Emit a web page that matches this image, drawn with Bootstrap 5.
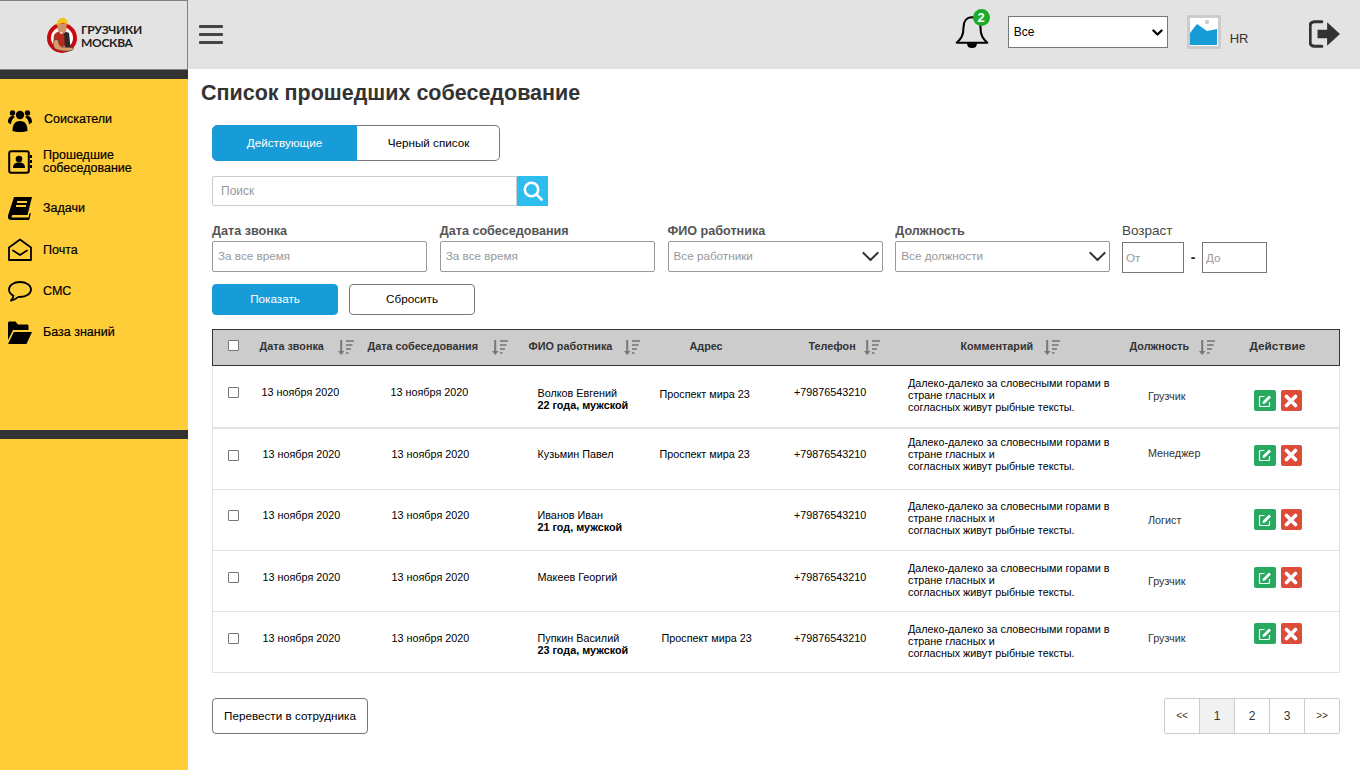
<!DOCTYPE html>
<html lang="ru">
<head>
<meta charset="utf-8">
<title>Список прошедших собеседование</title>
<link href="https://cdn.jsdelivr.net/npm/bootstrap@5.3.0/dist/css/bootstrap.min.css" rel="stylesheet">
<style>
html,body{height:100%}
body{font-family:"Liberation Sans",Arial,sans-serif;font-size:12px;color:#000;background:#fff;overflow:hidden}
.shell{width:1360px;height:770px}
.side{width:188px;background:#ffcd38;flex:none}
.logo-box{height:70px;background:#e3e3e3;border:1px solid #808080;border-left:0;gap:3px;padding-left:46px}
.logo-text{font-family:Lato,sans-serif;font-weight:700;font-size:12px;letter-spacing:-.3px;line-height:13px;color:#222;margin-top:1px}
.dark-bar{height:9px;background:#333}
.side-nav{height:351px;padding-top:19px}
.side-item{height:41.4px;padding-left:8px;color:#000;font-size:12.5px;line-height:13px;text-decoration:none;-webkit-text-stroke:.2px #000}
.side-item:first-child{height:43.6px}
.side-item:first-child .side-ico{margin-right:12px}
.side-item.two{margin-bottom:5px}
.side-ico{width:24px;height:24px;flex:none;margin-right:11px}
.top{height:69px;background:#e3e3e3;padding-left:11px}
.burger{width:24px;flex:none;margin-right:auto}
.burger i{display:block;height:3px;background:#444;margin:5px 0;border-radius:1px}
.top-sel{width:160px;height:32px;padding:0 5px;border:1px solid #777;border-radius:0;font-size:12px;color:#000;margin:0 19px 5px 0;background-position:right 4px center;background-size:11px;background-image:url("data:image/svg+xml,%3csvg xmlns='http://www.w3.org/2000/svg' viewBox='0 0 16 16'%3e%3cpath fill='none' stroke='%23000' stroke-width='3.200' stroke-linecap='round' stroke-linejoin='round' d='M2 5l6 6 6-6'/%3e%3c/svg%3e")}
.bell-wrap{width:36px;height:46px;margin:0 17px 7px 0}
.cnt{right:1px;top:1px;width:17px;height:17px;background:#1aab2a;color:#fff;font-size:13px;font-weight:700;line-height:17px;padding:0;border-radius:50%}
.ava{width:34px;height:34px;border:3px solid #ccc;background:#fff;margin:0 9px 5px 0}
.hr-name{font-size:13px;color:#333;margin:9px 60.5px 0 0}
.exit{margin:0 19px 1px 0}
.main{padding:0 20px 0 13px;min-width:0}
.ttl{font-size:21.5px;font-weight:700;color:#333;line-height:26px;margin:11px 0 19px;}
.inner{padding-left:11px}
.tabs-w .btn{width:144px;height:36px;font-size:11.7px;padding:0;line-height:34px;border-radius:5px}
.tabs-w .btn-blue{width:145px}
.tabs-w .btn-line{width:143px;padding-left:1px}
.btn-blue{background:#189cd8;border:1px solid #189cd8;color:#fff}
.btn-blue:hover{background:#189cd8;color:#fff;border-color:#189cd8}
.btn-line{background:#fff;border:1px solid #777;color:#000}
.search-w{width:336px;height:30px;margin-top:15px}
.search-w .form-control{height:30px;font-size:12px;padding:0 8px;border:1px solid #ccc;border-radius:2px 0 0 2px;color:#777}
.form-control::placeholder{color:#999}
.search-b{width:31px;background:#2dbdee;border:0;padding:0;flex:none;border-radius:0}
.flt{gap:12.75px;margin-top:16px}
.fld{width:215px}
.fld-age{margin-left:-1px}
.flabel{font-size:12.6px;font-weight:700;color:#555;line-height:18px;margin:0 0 1px;display:block}
.flabel.reg{font-weight:400;color:#444;font-size:13.5px}
.fld .form-control,.fld .form-select{height:31px;font-size:11.7px;padding:0 5px 1px;border:1px solid #999;border-radius:2px;color:#999}
.fld .form-control{padding-bottom:3px}
.fld .form-select{background-size:19px;background-position:right 2px center;background-image:url("data:image/svg+xml,%3csvg xmlns='http://www.w3.org/2000/svg' viewBox='0 0 16 16'%3e%3cpath fill='none' stroke='%23333' stroke-width='1.700' stroke-linecap='round' stroke-linejoin='round' d='M2 5l6 6 6-6'/%3e%3c/svg%3e")}
.age{margin-top:2px}
.age .form-control{width:62px;height:31px;font-size:11.7px;padding:0 3px;border:1px solid #777;border-radius:0;color:#999}
.age .form-control + .dash + .form-control{width:65px}
.dash{width:18px;text-align:center;font-weight:700;font-size:14px;color:#222}
.acts{margin-top:11px;gap:11px}
.acts .btn{width:126px;height:31px;font-size:11.7px;padding:0;line-height:28px;border-radius:4px}
.grid-t{table-layout:fixed;width:1127px;margin:14px 0 0;border-collapse:collapse;font-size:10.8px;line-height:12px;color:#000;--bs-table-bg:transparent}
.grid-t th{height:36px;background:#ccc;border:solid #333;border-width:1px 0;padding:0;font-weight:700;font-size:10.8px;color:#333;vertical-align:middle;white-space:nowrap;box-shadow:none}
.grid-t th:first-child{border-left:1px solid #333}
.grid-t th:last-child{border-right:1px solid #333;font-size:11.8px;padding-bottom:4px}
.grid-t th.h4c{padding-bottom:4px}
.grid-t td{padding:0;vertical-align:top;border:0;border-bottom:1px solid #e3e3e3;box-shadow:none;color:#000}
.grid-t td:first-child{border-left:1px solid #e3e3e3}
.grid-t td:last-child{border-right:1px solid #e3e3e3}
.grid-t td.c-ps{color:#333}
.grid-t tr.r1 td{height:62px;border-bottom-width:2px}
.grid-t tr.r2 td{height:62px}
.grid-t tr.r3 td,.grid-t tr.r4 td,.grid-t tr.r5 td{height:61px}
.sort{display:inline-block;vertical-align:middle;margin-left:14px}
.sort.m12{margin-left:12px}
.sort.m11{margin-left:11px}
.sort.m10{margin-left:10px}
.sort.m8{margin-left:8px}
.ck{appearance:none;-webkit-appearance:none;display:block;width:11px;height:11px;margin:0;border:1px solid #767676;background:#fff;border-radius:1px}
th .ck{margin:0 0 4px 15px}
td .ck{margin-left:15px}
.c-dt{padding-left:12px!important}
.c-dt.fst{padding-left:11px!important}
.c-dt2{padding-left:31px!important}
.c-dt2.fst{padding-left:30px!important}
.c-nm{padding-left:17px!important}
.c-ad{padding-left:9px!important}
.c-ad.alt{padding-left:11px!important}
.c-ph{padding-left:33.5px!important}
.c-cm{padding-left:7.5px!important}
.c-ps{padding-left:27.5px!important}
.c-ac{padding-left:13px!important;white-space:nowrap}
.h1c{padding-left:9px!important}
.h2c{padding-left:7px!important}
.h3c{padding-left:8px!important}
.h4c{padding-left:39px!important}
.h5c{padding-left:48px!important}
.h6c{padding-left:60px!important}
.h7c{padding-left:9px!important}
.h8c{padding-left:9px!important}
.t7{padding-top:7px!important}.t10{padding-top:10px!important}.t11{padding-top:11px!important}
.t16{padding-top:16px!important}.t18{padding-top:18px!important}.t19{padding-top:19px!important}
.t20{padding-top:20px!important}.t21{padding-top:21px!important}.t22{padding-top:22px!important}
.t24{padding-top:24px!important}
.ib{display:inline-flex;align-items:center;justify-content:center;width:22px;height:21px;padding:0;border:0;border-radius:2px;vertical-align:top}
.ib-g{background:#27a960;margin-right:5px}
.ib-r{background:#dd4b39;width:21px}
.bot{margin-top:25px}
.bot .btn{width:156px;height:36px;font-size:11.7px;padding:0;line-height:34px;border-radius:4px}
.pager{--bs-pagination-padding-x:0;--bs-pagination-padding-y:0;--bs-pagination-font-size:12px;--bs-pagination-color:#333;--bs-pagination-border-color:#ccc;--bs-pagination-border-radius:2px;--bs-pagination-hover-color:#333;margin:0}
.pager .page-link{width:36px;height:36px;line-height:34px;text-align:center;color:#333}
.pager .page-item:first-child .page-link,.pager .page-item:last-child .page-link{font-size:10px;width:36px}
.pager .on .page-link{background:#f1f1f1}
</style>
</head>
<body>
<div class="shell d-flex">
  <aside class="side d-flex flex-column">
    <div class="logo-box d-flex align-items-center">
      <svg width="32" height="38" viewBox="0 0 32 38" aria-hidden="true">
        <circle cx="16" cy="22" r="13" fill="#fff" stroke="#c8090f" stroke-width="4"/>
        <path d="M8 19c2-3 5-4 8-4l3 1 1 14-10 2c-2-4-3-9-2-13z" fill="#bb2a1f"/>
        <path d="M18 15l5 2 1.500 14-5.500 1z" fill="#2a2a2a"/>
        <path d="M11.500 8h9v5c0 2.500-1.500 4.500-4 4.500s-5-2-5-4.500z" fill="#cf9468"/>
        <path d="M10.500 9.500C10.500 4 13 2 16.500 2s5.500 2.500 5.500 7l-3-1.500c-3-.5-6 .5-8.500 2z" fill="#f2c318"/>
        <path d="M13.500 17l2-1 1 1.500-1 .5z" fill="#fff"/>
        <path d="M8 24c-1 3-1 6 .5 8.500 3 2 9 3 15 2.500 3-.5 4-1.500 4-3.500l-12-.5c-2.500-2-3-5-3.500-7.500z" fill="#d99b6c" stroke="#3a2a20" stroke-width=".6"/>
      </svg>
      <span class="logo-text">ГРУЗЧИКИ<br>МОСКВА</span>
    </div>
    <div class="dark-bar"></div>
    <nav class="side-nav d-flex flex-column">
      <a class="side-item d-flex align-items-center" href="#">
        <svg class="side-ico" viewBox="0 0 24 24" aria-hidden="true"><circle cx="12" cy="7" r="4.200"/><circle cx="4.500" cy="5" r="2.700"/><circle cx="19.500" cy="5" r="2.700"/><path d="M4.500 23c0-6 2-10 7.500-10s7.500 4 7.500 10c-4 1.500-11 1.500-15 0z"/><path d="M0 14c0-4 2-6 4.500-6 1 0 2 .5 2.500 1-2 1-3.500 3-4 7-1 0-2-.5-3-2zM24 14c0-4-2-6-4.500-6-1 0-2 .5-2.500 1 2 1 3.500 3 4 7 1 0 2-.5 3-2z"/></svg>
        Соискатели</a>
      <a class="side-item two d-flex align-items-center" href="#">
        <svg class="side-ico" viewBox="0 0 24 24" aria-hidden="true"><rect x="1.200" y="1.200" width="19.600" height="21.600" rx="2" fill="none" stroke="#000" stroke-width="2"/><circle cx="11" cy="9" r="3.300"/><path d="M5 18c0-4 2-5.500 6-5.500s6 1.500 6 5.500z"/><path d="M22 5h2v3h-2zM22 10h2v3h-2zM22 15h2v3h-2z"/></svg>
        <span>Прошедшие<br>собеседование</span></a>
      <a class="side-item d-flex align-items-center" href="#">
        <svg class="side-ico" viewBox="0 0 24 24" aria-hidden="true"><path d="M6 0h18l-4.500 18H5c-1.500 0-2 2.500 0 2.500h15.500l1-4 1.500-.5-1.800 7H3c-2.500 0-3.500-2-3-4.500zM9 4v2h10V4zm-1 4v2h10V8z" fill-rule="evenodd"/></svg>
        Задачи</a>
      <a class="side-item d-flex align-items-center" href="#">
        <svg class="side-ico" viewBox="0 0 24 24" aria-hidden="true" fill="none" stroke="#000" stroke-width="1.800" stroke-linejoin="round"><path d="M1 9.500L12 1.500l11 8V22H1z"/><path d="M5 12.500l7 4.500 7-4.500" stroke-linecap="round"/></svg>
        Почта</a>
      <a class="side-item d-flex align-items-center" href="#">
        <svg class="side-ico" viewBox="0 0 24 24" aria-hidden="true" fill="none" stroke="#000" stroke-width="1.800" stroke-linejoin="round"><path d="M12 3C5.500 3 1 6.200 1 10.500c0 3 2 5 4.500 6.200C5.300 18.500 4.500 20 3 21.500c3-.3 5.500-2 7.500-3.600.5 0 1 .1 1.500.1 6.500 0 11-3.300 11-7.500S18.500 3 12 3z"/></svg>
        СМС</a>
      <a class="side-item d-flex align-items-center" href="#">
        <svg class="side-ico" viewBox="0 0 24 24" aria-hidden="true"><path d="M0 2c0-.8.6-1.500 1.500-1.500h6L10 3.500h9c1 0 1.500.7 1.500 1.500v4H5L0 19z"/><path d="M5.800 11H24l-5.500 12H0z"/></svg>
        База знаний</a>
    </nav>
    <div class="dark-bar"></div>
  </aside>
  <div class="flex-grow-1 d-flex flex-column" style="min-width:0">
    <header class="top d-flex align-items-center justify-content-end">
      <div class="burger"><i></i><i></i><i></i></div>
      <div class="bell-wrap position-relative">
        <svg width="34" height="33" viewBox="2 3 30 29" class="d-block mt-2" aria-hidden="true" fill="none" stroke="#000" stroke-width="1.800" stroke-linejoin="round"><path d="M17 4c-5 0-7.500 4-7.500 9 0 7-2 10-6 13.500h27c-4-3.500-6-6.500-6-13.500 0-5-2.500-9-7.500-9z"/><path d="M13.500 27c0 4.500 7 4.500 7 0" fill="#000"/></svg>
        <span class="badge cnt position-absolute">2</span>
      </div>
      <select class="form-select top-sel" aria-label="Фильтр"><option>Все</option></select>
      <div class="ava">
        <svg width="28" height="28" viewBox="0 0 28 28" class="d-block" aria-hidden="true"><circle cx="17" cy="4" r="2.200" fill="#ccc"/><path d="M0 15L7 6l10 7 10-2v16H0z" fill="#189cd8"/></svg>
      </div>
      <span class="hr-name">HR</span>
      <svg class="exit" width="32" height="28" viewBox="1 1 30 26" aria-hidden="true"><path d="M13 2.500H6A4 4 0 0 0 2 6.500v15a4 4 0 0 0 4 4h7" fill="none" stroke="#333" stroke-width="3" stroke-linecap="round"/><path d="M9 10h9V3l12 11-12 11v-7H9z" fill="#333"/></svg>
    </header>
    <main class="main">
      <h1 class="ttl">Список прошедших собеседование</h1>
      <div class="inner">
        <div class="tabs-w d-flex">
          <a class="btn btn-blue rounded-end-0" href="#">Действующие</a>
          <a class="btn btn-line rounded-start-0 border-start-0" href="#">Черный список</a>
        </div>
        <div class="search-w d-flex">
          <input class="form-control" placeholder="Поиск">
          <button class="btn search-b d-flex align-items-center justify-content-center" aria-label="Поиск"><svg width="20" height="20" viewBox="0 0 20 20" fill="none" stroke="#fff" stroke-width="2.600" stroke-linecap="round"><circle cx="8.500" cy="8.500" r="6.700"/><path d="M13.500 13.500l5 5"/></svg></button>
        </div>
        <div class="flt d-flex">
          <div class="fld"><label class="flabel">Дата звонка</label><input class="form-control" placeholder="За все время"></div>
          <div class="fld"><label class="flabel">Дата собеседования</label><input class="form-control" placeholder="За все время"></div>
          <div class="fld"><label class="flabel">ФИО работника</label><select class="form-select"><option>Все работники</option></select></div>
          <div class="fld"><label class="flabel">Должность</label><select class="form-select"><option>Все должности</option></select></div>
          <div class="fld-age"><label class="flabel reg">Возраст</label><div class="age d-flex align-items-center"><input class="form-control" placeholder="От"><span class="dash">-</span><input class="form-control" placeholder="До"></div></div>
        </div>
        <div class="acts d-flex">
          <a class="btn btn-blue" href="#">Показать</a>
          <a class="btn btn-line" href="#">Сбросить</a>
        </div>
        <table class="table grid-t">
          <colgroup><col style="width:38px"><col style="width:110px"><col style="width:160px"><col style="width:130px"><col style="width:110px"><col style="width:140px"><col style="width:220px"><col style="width:120px"><col style="width:99px"></colgroup>
          <thead>
            <tr>
              <th><input type="checkbox" class="ck" aria-label="Все"></th>
              <th class="h1c">Дата звонка<svg class="sort" width="16" height="17" viewBox="0 0 16 17"><use href="#ss"/></svg></th>
              <th class="h2c">Дата собеседования<svg class="sort" width="16" height="17" viewBox="0 0 16 17"><use href="#ss"/></svg></th>
              <th class="h3c">ФИО работника<svg class="sort m12" width="16" height="17" viewBox="0 0 16 17"><use href="#ss"/></svg></th>
              <th class="h4c">Адрес</th>
              <th class="h5c">Телефон<svg class="sort m8" width="16" height="17" viewBox="0 0 16 17"><use href="#ss"/></svg></th>
              <th class="h6c">Комментарий<svg class="sort m11" width="16" height="17" viewBox="0 0 16 17"><use href="#ss"/></svg></th>
              <th class="h7c">Должность<svg class="sort m10" width="16" height="17" viewBox="0 0 16 17"><use href="#ss"/></svg></th>
              <th class="h8c">Действие</th>
            </tr>
          </thead>
          <tbody>
            <tr class="r1">
              <td class="t21"><input type="checkbox" class="ck" aria-label="Выбрать"></td>
              <td class="c-dt fst t20">13 ноября 2020</td><td class="c-dt2 fst t20">13 ноября 2020</td>
              <td class="c-nm t21">Волков Евгений<br><b>22 года, мужской</b></td>
              <td class="c-ad t22">Проспект мира 23</td><td class="c-ph t20">+79876543210</td>
              <td class="c-cm t11">Далеко-далеко за словесными горами в стране гласных и<br>согласных живут рыбные тексты.</td>
              <td class="c-ps t24">Грузчик</td>
              <td class="c-ac t24"><button class="ib ib-g" aria-label="Изменить"><svg width="14" height="14"><use href="#ed"/></svg></button><button class="ib ib-r" aria-label="Удалить"><svg width="14" height="14"><use href="#xx"/></svg></button></td>
            </tr>
            <tr class="r2">
              <td class="t21"><input type="checkbox" class="ck" aria-label="Выбрать"></td>
              <td class="c-dt t19">13 ноября 2020</td><td class="c-dt2 t19">13 ноября 2020</td>
              <td class="c-nm t19">Кузьмин Павел</td>
              <td class="c-ad t19">Проспект мира 23</td><td class="c-ph t19">+79876543210</td>
              <td class="c-cm t7">Далеко-далеко за словесными горами в стране гласных и<br>согласных живут рыбные тексты.</td>
              <td class="c-ps t18">Менеджер</td>
              <td class="c-ac t16"><button class="ib ib-g" aria-label="Изменить"><svg width="14" height="14"><use href="#ed"/></svg></button><button class="ib ib-r" aria-label="Удалить"><svg width="14" height="14"><use href="#xx"/></svg></button></td>
            </tr>
            <tr class="r3">
              <td class="t20"><input type="checkbox" class="ck" aria-label="Выбрать"></td>
              <td class="c-dt t19">13 ноября 2020</td><td class="c-dt2 t19">13 ноября 2020</td>
              <td class="c-nm t19">Иванов Иван<br><b>21 год, мужской</b></td>
              <td class="c-ad t19"></td><td class="c-ph t19">+79876543210</td>
              <td class="c-cm t10">Далеко-далеко за словесными горами в стране гласных и<br>согласных живут рыбные тексты.</td>
              <td class="c-ps t24">Логист</td>
              <td class="c-ac t19"><button class="ib ib-g" aria-label="Изменить"><svg width="14" height="14"><use href="#ed"/></svg></button><button class="ib ib-r" aria-label="Удалить"><svg width="14" height="14"><use href="#xx"/></svg></button></td>
            </tr>
            <tr class="r4">
              <td class="t21"><input type="checkbox" class="ck" aria-label="Выбрать"></td>
              <td class="c-dt t20">13 ноября 2020</td><td class="c-dt2 t20">13 ноября 2020</td>
              <td class="c-nm t20">Макеев Георгий</td>
              <td class="c-ad t20"></td><td class="c-ph t20">+79876543210</td>
              <td class="c-cm t11">Далеко-далеко за словесными горами в стране гласных и<br>согласных живут рыбные тексты.</td>
              <td class="c-ps t24">Грузчик</td>
              <td class="c-ac t16"><button class="ib ib-g" aria-label="Изменить"><svg width="14" height="14"><use href="#ed"/></svg></button><button class="ib ib-r" aria-label="Удалить"><svg width="14" height="14"><use href="#xx"/></svg></button></td>
            </tr>
            <tr class="r5">
              <td class="t21"><input type="checkbox" class="ck" aria-label="Выбрать"></td>
              <td class="c-dt t20">13 ноября 2020</td><td class="c-dt2 t20">13 ноября 2020</td>
              <td class="c-nm t20">Пупкин Василий<br><b>23 года, мужской</b></td>
              <td class="c-ad alt t20">Проспект мира 23</td><td class="c-ph t20">+79876543210</td>
              <td class="c-cm t11">Далеко-далеко за словесными горами в стране гласных и<br>согласных живут рыбные тексты.</td>
              <td class="c-ps t20">Грузчик</td>
              <td class="c-ac t11"><button class="ib ib-g" aria-label="Изменить"><svg width="14" height="14"><use href="#ed"/></svg></button><button class="ib ib-r" aria-label="Удалить"><svg width="14" height="14"><use href="#xx"/></svg></button></td>
            </tr>
          </tbody>
        </table>
        <div class="bot d-flex justify-content-between">
          <a class="btn btn-line" href="#">Перевести в сотрудника</a>
          <ul class="pagination pager">
            <li class="page-item"><a class="page-link" href="#">&lt;&lt;</a></li>
            <li class="page-item on"><a class="page-link" href="#">1</a></li>
            <li class="page-item"><a class="page-link" href="#">2</a></li>
            <li class="page-item"><a class="page-link" href="#">3</a></li>
            <li class="page-item"><a class="page-link" href="#">&gt;&gt;</a></li>
          </ul>
        </div>
      </div>
    </main>
  </div>
</div>
<svg width="0" height="0" class="position-absolute" aria-hidden="true">
  <symbol id="ss" viewBox="0 0 16 17"><path d="M2.200 1h2v11h2.300l-3.300 4-3.200-4h2.200z" fill="#777"/><path d="M8 1h8v2H8zM8 5h6.500v2H8zM8 9h5v2H8zM8 13h2.500v2H8z" fill="#888"/></symbol>
  <symbol id="ed" viewBox="0 0 14 14"><path d="M6.500 2.500H2.500a1 1 0 0 0-1 1v8a1 1 0 0 0 1 1h8a1 1 0 0 0 1-1V8" fill="none" stroke="#fff" stroke-width="1.200"/><path d="M5 7.500L11 1.500l2 2-6 6-2.500.5z" fill="#fff"/></symbol>
  <symbol id="xx" viewBox="0 0 14 14"><path d="M2.500 2.500l9 9M11.500 2.500l-9 9" stroke="#fff" stroke-width="3.600" stroke-linecap="round" fill="none"/></symbol>
</svg>
<script src="https://cdn.jsdelivr.net/npm/bootstrap@5.3.0/dist/js/bootstrap.bundle.min.js"></script>
</body>
</html>
